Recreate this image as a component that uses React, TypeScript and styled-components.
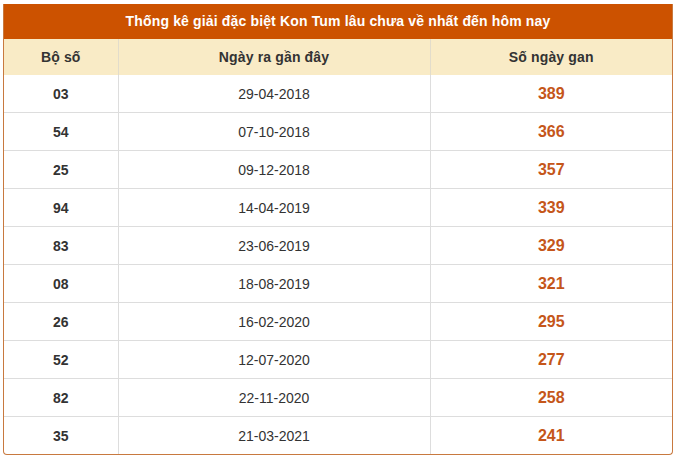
import React from 'react';
import styled, { createGlobalStyle } from 'styled-components';

const GlobalStyle = createGlobalStyle`
  body {
    margin: 0;
    background: #ffffff;
    font-family: "Liberation Sans", Arial, sans-serif;
  }
`;

const rows = [
  { num: '03', date: '29-04-2018', days: 389 },
  { num: '54', date: '07-10-2018', days: 366 },
  { num: '25', date: '09-12-2018', days: 357 },
  { num: '94', date: '14-04-2019', days: 339 },
  { num: '83', date: '23-06-2019', days: 329 },
  { num: '08', date: '18-08-2019', days: 321 },
  { num: '26', date: '16-02-2020', days: 295 },
  { num: '52', date: '12-07-2020', days: 277 },
  { num: '82', date: '22-11-2020', days: 258 },
  { num: '35', date: '21-03-2021', days: 241 },
];

export default function App() {
  return (
    <>
      <GlobalStyle />
      <Page>
        <Card>
          <Title>Thống kê giải đặc biệt Kon Tum lâu chưa về nhất đến hôm nay</Title>
          <Table>
            <colgroup>
              <col style={{ width: 114 }} />
              <col style={{ width: 312 }} />
              <col />
            </colgroup>
            <thead>
              <tr>
                <HeadCell>Bộ số</HeadCell>
                <HeadCell>Ngày ra gần đây</HeadCell>
                <HeadCell>Số ngày gan</HeadCell>
              </tr>
            </thead>
            <tbody>
              {rows.map((r) => (
                <tr key={r.num}>
                  <Cell $weight="bold">{r.num}</Cell>
                  <Cell>{r.date}</Cell>
                  <DaysCell>{r.days}</DaysCell>
                </tr>
              ))}
            </tbody>
          </Table>
        </Card>
      </Page>
    </>
  );
}

const Page = styled.div`
  padding: 4px 3px 0 3px;
  width: 670px;
`;

const Card = styled.div`
  border: 1px solid #c8793f;
  border-top: none;
  border-radius: 0 0 4px 4px;
  overflow: hidden;
`;

const Title = styled.div`
  background: #cc5200;
  color: #ffffff;
  font-weight: bold;
  font-size: 14px;
  letter-spacing: 0.15px;
  height: 35px;
  line-height: 35px;
  text-align: center;
`;

const Table = styled.table`
  width: 100%;
  border-collapse: collapse;
  table-layout: fixed;

  tr:last-child td {
    border-bottom: none;
  }
  td:first-child,
  th:first-child {
    border-left: none;
  }
  td:last-child,
  th:last-child {
    border-right: none;
  }
`;

const HeadCell = styled.th`
  background: #f9ebc6;
  color: #333333;
  font-size: 14px;
  letter-spacing: 0.15px;
  font-weight: bold;
  height: 36px;
  padding: 0;
  text-align: center;
  border-right: 1px solid #e2dccb;
`;

const Cell = styled.td<{ $weight?: string }>`
  height: 37px;
  padding: 0;
  text-align: center;
  font-size: 14px;
  color: #333333;
  font-weight: ${({ $weight }) => $weight || 'normal'};
  border: 1px solid #dddddd;
  border-top: none;
`;

const DaysCell = styled(Cell)`
  font-size: 16px;
  font-weight: bold;
  color: #c5561a;
`;
